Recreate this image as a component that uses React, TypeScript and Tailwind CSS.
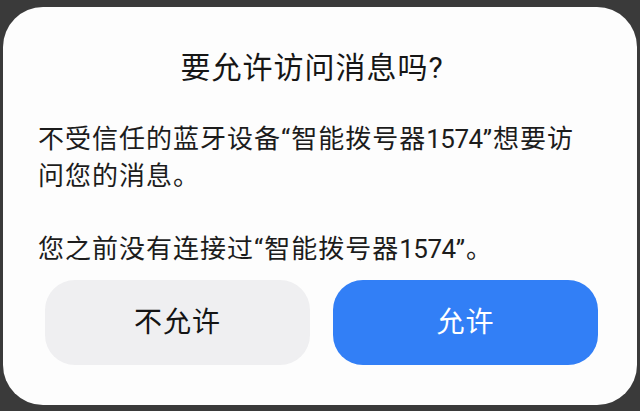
const cjk = "font-['Roboto','Noto_Sans_CJK_SC',sans-serif]";

function PermissionDialog() {
  return (
    <div className="h-[398px] w-[634px] rounded-[40px] bg-[#fdfdfd] flex flex-col">
      {/* Title */}
      <h1
        className={`${cjk} mt-[43px] pr-[16px] text-center text-[30px] leading-[36px] font-normal tracking-[1px] text-[#161616]`}
      >
        要允许访问消息吗?
      </h1>

      {/* Message body */}
      <div
        className={`${cjk} mt-[35px] px-[35px] text-[26px] leading-[36.5px] tracking-[1px] text-[#1c1c1c] whitespace-nowrap`}
      >
        <p>
          不受信任的蓝牙设备“智能拨号器<span className="tracking-[-0.5px]">1574</span>”想要访
          <br />
          问您的消息。
        </p>
        <p className="mt-[36.5px]">
          您之前没有连接过“智能拨号器<span className="tracking-[-0.5px]">1574</span>”。
        </p>
      </div>

      {/* Actions */}
      <div className="mt-[13px] flex gap-[23px] pl-[42px] pr-[39px]">
        <button
          className={`${cjk} h-[85px] flex-1 rounded-[30px] bg-[#efeff1] text-[28px] font-normal tracking-[1px] text-[#141414]`}
        >
          不允许
        </button>
        <button
          className={`${cjk} h-[85px] flex-1 rounded-[30px] bg-[#327ff6] text-[28px] font-normal tracking-[1px] text-white`}
        >
          允许
        </button>
      </div>
    </div>
  );
}

export default function App() {
  return (
    <div className="h-[411px] w-[640px] bg-[#3a3a3a] pt-[7px] pl-[3px]">
      <PermissionDialog />
    </div>
  );
}
